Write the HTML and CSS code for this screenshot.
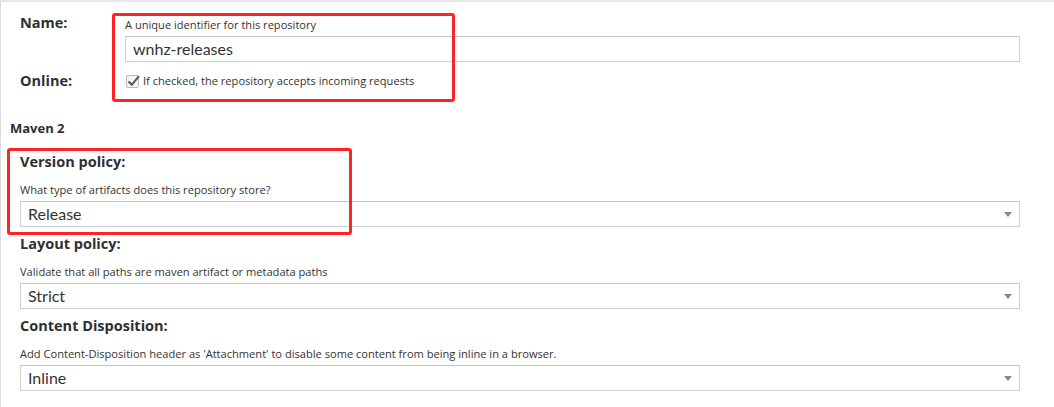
FILE: index.html
```html
<!DOCTYPE html>
<html>
<head>
<meta charset="utf-8">
<link rel="stylesheet" href="styles.css">
</head>
<body>
<div class="page">
  <form class="form">
    <div class="row row-name">
      <div class="row-label">Name:</div>
      <div class="row-field">
        <div class="help">A unique identifier for this repository</div>
        <div class="input">wnhz-releases</div>
      </div>
    </div>
    <div class="row row-online">
      <div class="row-label">Online:</div>
      <div class="row-field check">
        <span class="checkbox"><svg width="15" height="15" viewBox="0 0 15 15"><path d="M2.5 7.5 L5.8 10.8 L13 2.2" fill="none" stroke="#555" stroke-width="2"/></svg></span>
        <span class="check-text">If checked, the repository accepts incoming requests</span>
      </div>
    </div>
    <div class="section-title">Maven 2</div>
    <div class="field field-first">
      <div class="label">Version policy:</div>
      <div class="help">What type of artifacts does this repository store?</div>
      <div class="select">Release</div>
    </div>
    <div class="field">
      <div class="label">Layout policy:</div>
      <div class="help">Validate that all paths are maven artifact or metadata paths</div>
      <div class="select">Strict</div>
    </div>
    <div class="field">
      <div class="label">Content Disposition:</div>
      <div class="help">Add Content-Disposition header as 'Attachment' to disable some content from being inline in a browser.</div>
      <div class="select">Inline</div>
    </div>
  </form>
  <div class="mark mark-one"></div>
  <div class="mark mark-two"></div>
</div>
</body>
</html>
```
FILE: styles.css
```css
html, body {
  margin: 0;
  padding: 0;
  background: #fff;
}
body {
  font-family: "Open Sans", Lato, sans-serif;
  color: #333;
}
.page {
  position: relative;
  width: 1054px;
  height: 407px;
  box-sizing: border-box;
  border-top: 2px solid #e6e6e6;
  border-left: 1px solid #dcdcdc;
  overflow: hidden;
}
.form {
  padding: 12px 34px 0 19px;
}
.row {
  display: flex;
}
.row-label {
  width: 105px;
  flex: none;
  font-size: 14.5px;
  font-weight: 700;
  line-height: 18px;
  color: #2e2f33;
}
.row-field {
  flex: 1;
}
.row-name .row-field {
  padding-top: 4px;
}
.help {
  font-size: 11.1px;
  line-height: 14px;
  color: #333;
}
.input, .select {
  position: relative;
  box-sizing: border-box;
  height: 26px;
  margin-top: 4px;
  border: 1px solid #cfcfcf;
  border-top-color: #c4c4c4;
  padding-left: 7px;
  font-family: Lato, "Open Sans", sans-serif;
  font-size: 16px;
  line-height: 24px;
  color: #333;
}
.row-online {
  margin-top: 10px;
}
.check {
  display: flex;
  align-items: center;
  height: 18px;
  gap: 4px;
}
.checkbox {
  position: relative;
  width: 13px;
  height: 13px;
  box-sizing: border-box;
  border: 1px solid #b9b9b9;
  border-radius: 2px;
  background: #f4f4f4;
  margin-left: 1px;
}
.checkbox svg {
  position: absolute;
  left: -1px;
  top: -2px;
}
.check-text {
  font-size: 11.1px;
  line-height: 14px;
}
.section-title {
  margin: 30px 0 0 -10px;
  font-size: 13px;
  font-weight: 700;
  line-height: 16px;
  color: #2e2f33;
}
.field {
  padding-top: 8px;
}
.field-first {
  padding-top: 17px;
}
.label {
  font-size: 14.5px;
  font-weight: 700;
  line-height: 18px;
  color: #2e2f33;
}
.field .help {
  margin-top: 12px;
}
.select::after {
  content: "";
  position: absolute;
  right: 7px;
  top: 10px;
  border-left: 4.5px solid transparent;
  border-right: 4.5px solid transparent;
  border-top: 5px solid #8a8a8a;
}
.mark {
  position: absolute;
  border: 3px solid #ff2424;
  border-radius: 3px;
}
.mark-one {
  left: 111px;
  top: 11px;
  width: 337px;
  height: 83px;
}
.mark-two {
  left: 6px;
  top: 146px;
  width: 339px;
  height: 81px;
}
```
